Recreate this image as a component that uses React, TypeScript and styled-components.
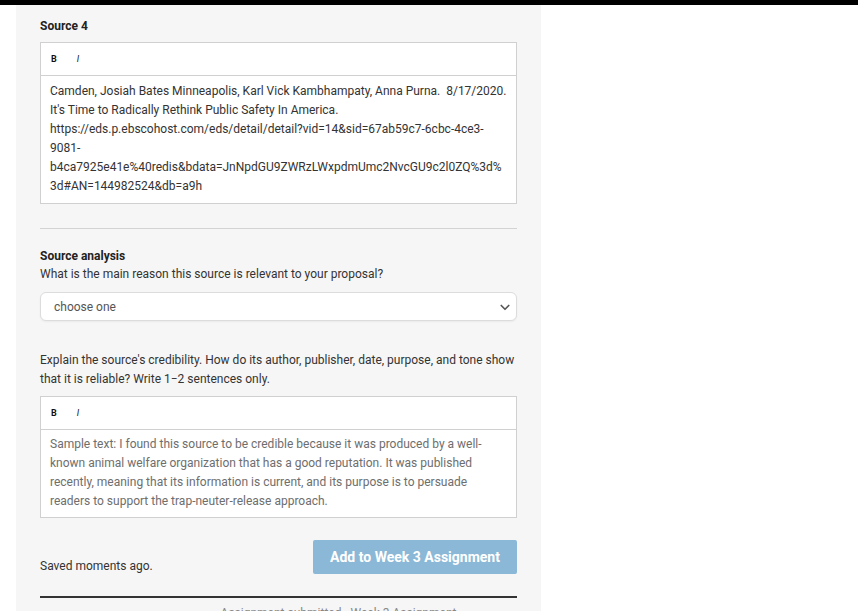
import React from "react";
import styled, { createGlobalStyle } from "styled-components";

const Global = createGlobalStyle`
  html, body { margin: 0; padding: 0; background: #fff; }
  body { font-family: Roboto, "Noto Sans", Arial, sans-serif; color: #222; }
  * { box-sizing: border-box; }
`;

const TopBar = styled.div`
  height: 5px;
  background: #000;
  position: relative;
  z-index: 2;
`;

const Page = styled.div`
  display: flex;
  padding-left: 16px;
  height: 606px;
  overflow: hidden;
`;

const Panel = styled.div`
  width: 525px;
  background: #f6f6f6;
  padding: 0 24px 0 24px;
  display: flex;
  flex-direction: column;
  overflow: hidden;

  & > * {
    flex-shrink: 0;
  }
`;

const ClippedCaption = styled.div`
  margin-top: -10px;
  height: 12px;
  font-size: 12px;
  line-height: 12px;
  color: #888;
`;

const Heading = styled.div`
  font-size: 12px;
  font-weight: 700;
  line-height: 18px;
  color: #222;
`;

const Prompt = styled.div`
  font-size: 12px;
  line-height: 19px;
  color: #333;
`;

const Editor = styled.div`
  border: 1px solid #d0d0d0;
  background: #fff;
`;

const Toolbar = styled.div`
  height: 33px;
  border-bottom: 1px solid #d0d0d0;
  display: flex;
  align-items: center;
  gap: 20px;
  padding-left: 10px;
  font-size: 9px;
`;

const ToolButton = styled.span<{ $italic?: boolean }>`
  font-weight: ${(p) => (p.$italic ? 400 : 700)};
  font-style: ${(p) => (p.$italic ? "italic" : "normal")};
  color: #111;
`;

const EditorBody = styled.div<{ $muted?: boolean; $loose?: boolean }>`
  padding: ${(p) => (p.$loose ? "6px 9px 7px 9px" : "5px 9px 6px 9px")};
  font-size: 12px;
  line-height: 19px;
  color: ${(p) => (p.$muted ? "#6e6e6e" : "#333")};
  word-break: break-all;
`;

const Divider = styled.hr`
  border: 0;
  border-top: 1px solid #d3d3d3;
  margin: 0;
`;

const Select = styled.div`
  height: 29px;
  border: 1px solid #dcdcdc;
  border-radius: 6px;
  background: #fff;
  box-shadow: 0 1px 2px rgba(0, 0, 0, 0.05);
  display: flex;
  align-items: center;
  justify-content: space-between;
  padding: 0 5px 0 13px;
  font-size: 12px;
  color: #555;
`;

const Footer = styled.div`
  display: flex;
  justify-content: space-between;
  align-items: flex-end;
`;

const Saved = styled.div`
  font-size: 12px;
  line-height: 14px;
  color: #333;
  padding-bottom: 1px;
`;

const PrimaryButton = styled.button`
  width: 204px;
  height: 34px;
  border: 0;
  border-radius: 2px;
  background: #8ab8d6;
  color: #fff;
  font-family: inherit;
  font-size: 14px;
  font-weight: 700;
  cursor: default;
`;

const BottomRule = styled.div`
  height: 2px;
  background: #333;
`;

const NextCaption = styled.div`
  text-align: center;
  font-size: 12px;
  line-height: 12px;
  color: #888;
  padding-left: 120px;
`;

const Spacer = styled.div<{ $h: number }>`
  height: ${(p) => p.$h}px;
`;

const Chevron = () => (
  <svg width="12" height="12" viewBox="0 0 16 16">
    <path d="M3 6l5 5 5-5" fill="none" stroke="#555" strokeWidth="2.2" strokeLinecap="round" strokeLinejoin="round" />
  </svg>
);

export default function App() {
  return (
    <>
      <Global />
      <TopBar />
      <Page>
        <Panel>
          <ClippedCaption>Assessment Rationale</ClippedCaption>
          <Spacer $h={10} />
          <Heading>Source 4</Heading>
          <Spacer $h={7} />
          <Editor>
            <Toolbar>
              <ToolButton>B</ToolButton>
              <ToolButton $italic>I</ToolButton>
            </Toolbar>
            <EditorBody $loose>
              Camden, Josiah Bates Minneapolis, Karl Vick Kambhampaty, Anna Purna.&nbsp; 8/17/2020.
              <br />
              It's Time to Radically Rethink Public Safety In America.
              <br />
              https://eds.p.ebscohost.com/eds/detail/detail?vid=14&amp;sid=67ab59c7-6cbc-4ce3-
              <br />
              9081-
              <br />
              b4ca7925e41e%40redis&amp;bdata=JnNpdGU9ZWRzLWxpdmUmc2NvcGU9c2l0ZQ%3d%
              <br />
              3d#AN=144982524&amp;db=a9h
            </EditorBody>
          </Editor>
          <Spacer $h={24} />
          <Divider />
          <Spacer $h={18} />
          <Heading>Source analysis</Heading>
          <Prompt>What is the main reason this source is relevant to your proposal?</Prompt>
          <Spacer $h={8} />
          <Select>
            <span>choose one</span>
            <Chevron />
          </Select>
          <Spacer $h={30} />
          <Prompt>
            Explain the source's credibility. How do its author, publisher, date, purpose, and tone show
            that it is reliable? Write 1−2 sentences only.
          </Prompt>
          <Spacer $h={7} />
          <Editor>
            <Toolbar>
              <ToolButton>B</ToolButton>
              <ToolButton $italic>I</ToolButton>
            </Toolbar>
            <EditorBody $muted>
              Sample text: I found this source to be credible because it was produced by a well-
              <br />
              known animal welfare organization that has a good reputation. It was published
              <br />
              recently, meaning that its information is current, and its purpose is to persuade
              <br />
              readers to support the trap-neuter-release approach.
            </EditorBody>
          </Editor>
          <Spacer $h={22} />
          <Footer>
            <Saved>Saved moments ago.</Saved>
            <PrimaryButton>Add to Week 3 Assignment</PrimaryButton>
          </Footer>
          <Spacer $h={22} />
          <BottomRule />
          <Spacer $h={9} />
          <NextCaption>Assignment submitted · Week 3 Assignment</NextCaption>
        </Panel>
      </Page>
    </>
  );
}
